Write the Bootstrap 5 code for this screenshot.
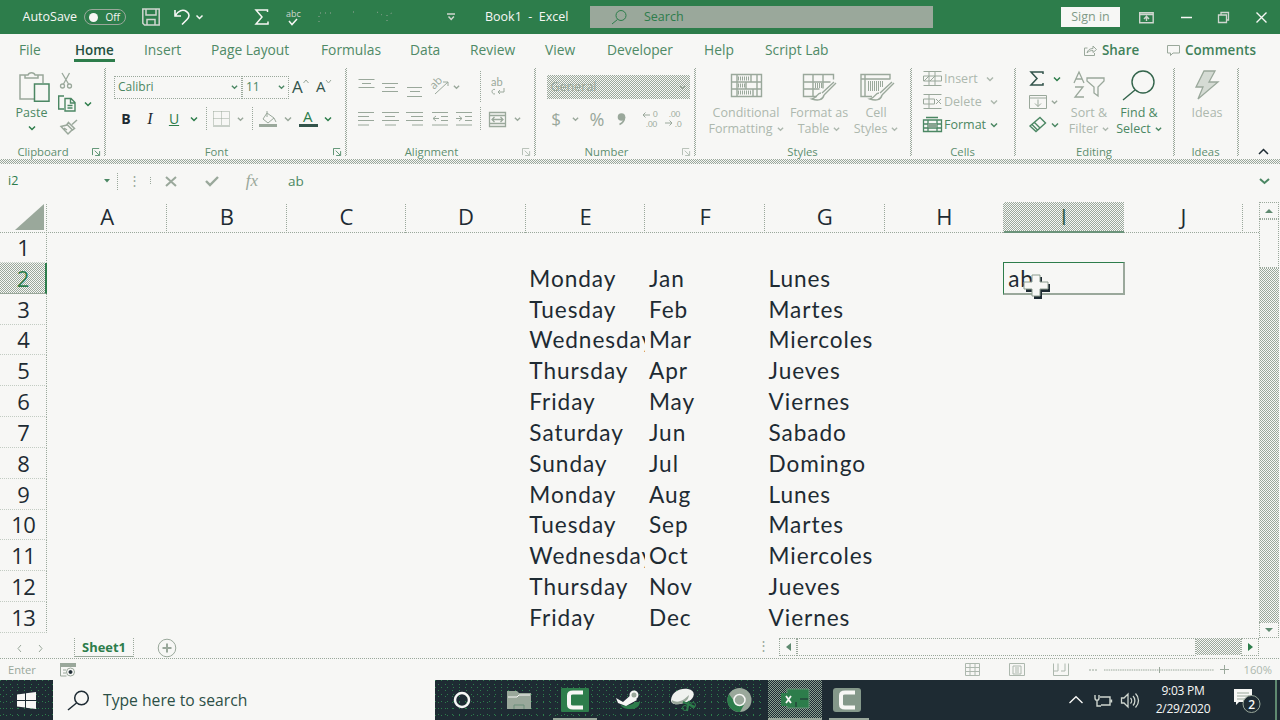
<!DOCTYPE html>
<html lang="en">
<head>
<meta charset="utf-8">
<title>Book1 - Excel</title>
<link rel="stylesheet" href="https://cdn.jsdelivr.net/npm/bootstrap@5.3.0/dist/css/bootstrap.min.css">
<style>
:root{--g:#2d7d4b;--w:#f7f7f5;--m:#9aa89b;--d:#1e2b33}
body{width:1280px;height:720px;overflow:hidden;background:var(--w);color:var(--g);font-family:"Open Sans","Noto Sans",sans-serif;font-size:12.5px;line-height:16px}
svg{display:block;flex:none;fill:none;stroke:currentColor;overflow:visible}
.tx{white-space:nowrap}
.mut{color:var(--m)}.drk{color:var(--d)}.mid{color:#4b8763}
.fade-t{color:#adb8ae}
.dither{background:repeating-conic-gradient(var(--m) 0 25%,var(--w) 0 50%) 0 0/2px 2px}
.dots-x{height:1px;background:repeating-linear-gradient(90deg,var(--m) 0 1px,transparent 1px 2px)}
.vdot{width:1px;background:repeating-linear-gradient(var(--m) 0 1px,transparent 1px 2px)}
/* title bar */
.titlebar{height:34px;background:var(--g);color:var(--w);display:grid;grid-template-columns:84px 58px 34px 75px 32px 32px 160px 115px 343px 128px 59px 34px 38px 37px 51px;align-items:center}
.toggle{width:42px;height:16px;border:1.5px solid var(--m);border-radius:9px;font-size:10px;line-height:12px;padding:0 5px 0 4px}
.knob{width:9px;height:9px;border-radius:50%;background:var(--w)}
.searchbox{height:22px;background:var(--m);color:var(--g)}
.signin{height:20px;background:var(--w);color:#7f9a87}
.autosave{padding-left:22.5px}
.booktitle{padding-left:10px}
/* tabs */
.tabs{height:32px;padding-left:19px;font-size:13.8px;color:#4f8a66;display:grid;grid-template-columns:56px 69px 67px 110px 89px 60px 75px 62px 97px 61px 319px 18px 65px 18px 80px;align-items:center}
.tabs .on{color:#24503f;font-weight:600;font-size:13.4px;position:relative}
.tabs .on::after{content:"";position:absolute;left:-1px;width:41px;height:3px;top:17px;background:var(--g)}
.tabs b{font-weight:600;color:#3f8159;font-size:13.4px}
.tabs b:last-child{letter-spacing:.1px}
/* ribbon */
.ribbon{height:93px}
.grp{height:93px;position:relative}
.grp::after{content:"";position:absolute;right:0;top:2px;width:2px;height:88px;background:repeating-conic-gradient(var(--m) 0 25%,var(--w) 0 50%) 0 0/2px 2px}
.cap{position:absolute;left:0;right:0;top:78px;text-align:center;font-size:11.3px;color:#5d8e6f}
.launch{position:absolute;right:5px;top:82px}
.g1{width:106px}.g2{width:241px}.g3{width:189px}.g4{width:160px}.g5{width:216px}.g6{width:104px}.g7{width:159px}.g8{width:64px}
.r2{display:grid;height:32px;align-items:center;justify-items:center}
.body2{padding-top:5px}
.fr1{grid-template-columns:128px 47px 22px 27px;padding-left:8px}
.fr2{grid-template-columns:24px 24px 24px 16px 8px 22px 17px 6px 25px 15px 26px 13px;padding-left:8px}
.al{grid-template-columns:24px 24px 25px 26px 22px 10px 24px 16px;padding-left:7px}
.nu{grid-template-columns:24px 14px 30px 18px 8px 24px 24px;padding-left:8px}
.combo{height:23px;border:1px dotted var(--m);padding:0 3px;font-size:12px;color:#4b8763}
.pastecol{width:63px;padding-top:5px}
.pastecol svg:first-child{margin-left:5px}
.clipcol{margin-left:-5px;padding-top:3px}
.clipcol .r3:not(:nth-child(2)){padding-left:2px}
.r3{height:23px}
.big{height:72px;padding-top:5px}
.big svg{margin-bottom:4px}
.sty{padding-top:8px}
.numbox{width:143px;height:24px}
.tiny{font:8px Lato,sans-serif}
.fbar{height:38px;padding-bottom:4px}
/* sheet */
.sheet{height:436px}
.hrow{display:grid;grid-template-columns:47.4px repeat(10,119.6px);height:30px;font-size:22px;line-height:29px;text-align:center;color:var(--d)}
.hrow>div{position:relative}
.hrow>div:not(.sel)::after{content:"";position:absolute;right:0;top:2px;bottom:0;width:1px;background:repeating-linear-gradient(var(--m) 0 1px,transparent 1px 2px)}
.hrow .sel{border-bottom:2px solid #6b937a;color:#346249}
.drow{display:grid;grid-template-columns:47.4px repeat(10,119.6px);height:30.83px;font-family:Lato,sans-serif;font-size:22.6px;line-height:30px;letter-spacing:.93px;color:var(--d);position:relative;top:-1px}
.drow .num{font-family:"Open Sans",sans-serif;font-size:22px;letter-spacing:-.6px;text-align:center;border-bottom:1px dotted #c3ccc3;border-right:1px dotted var(--m)}
.drow .num.sel{color:var(--g);border-right:2px solid var(--g);border-bottom:1px solid var(--m)}
.drow .cellx{padding-left:3.6px;overflow:hidden;white-space:nowrap;line-height:31px}
.drow .active{overflow:visible;position:relative;padding-left:4px}
.box{position:absolute;left:-1px;top:-1px;width:122px;height:33px;border:2px solid var(--m);border-top:1.5px solid var(--g);border-left:1.5px solid var(--g)}
.cursor{position:absolute;left:19px;top:10px}
.sbtn{border:1px dotted var(--m)}
.vsb{width:20px}
.tabsrow{height:20px}
.sheettab{width:60px;height:19px;line-height:18px;font-size:12.9px;border:1px dotted #9aa89b;border-top:0;border-bottom:1px solid #9aa89b}
.status{height:21px;font-size:11.2px}
.task{height:40px;background:var(--d);color:var(--w)}
.speck{background-color:var(--d);background-image:radial-gradient(circle at .5px .5px,#2d7d4b 0 .6px,transparent .65px),radial-gradient(circle at 3.5px 4.5px,#2d7d4b 0 .6px,transparent .65px);background-size:6px 7px,7px 6px}
.ti{height:40px;position:relative}
.run::after{content:"";position:absolute;left:4px;right:4px;bottom:0;height:2px;background:var(--m)}
.taskicons{display:grid;grid-template-columns:54px 60px 52px 54px 58px 52px 60px 48px;width:438px}
.taskicons .ti:nth-child(n+7){background-color:var(--d)}
.xl{width:54px;margin-left:3px;border-bottom:2px solid #9aa89b;background:repeating-conic-gradient(var(--d) 0 25%,#8a9f8f 0 50%) 0 0/2px 2px}
.find{width:382px;font-size:15.7px;color:#2c4f46;background:var(--w)}
.find svg{margin:0 14px 0 15px}
.clock{width:74px;font-size:12px;line-height:18px;letter-spacing:-.25px}
</style>
</head>
<body>
<svg width="0" height="0" class="position-absolute">
<symbol id="cv" viewBox="0 0 8 6"><path d="M1 1.5l3 3 3-3" fill="none" stroke="currentColor" stroke-width="1.5"/></symbol>
<symbol id="la" viewBox="0 0 10 9"><path d="M.5 8V.5H8M3 3l5 5M8.500 3.500v5h-5" fill="none" stroke="currentColor"/></symbol>
</svg>

<header class="titlebar">
<div class="tx autosave">AutoSave</div>
<div class="toggle d-flex align-items-center justify-content-between"><span class="knob"></span><span>Off</span></div>
<svg width="18" height="18" stroke-width="1.5" color="#cfd6cf"><path d="M.8 1h16.400v16H2.500L.8 15.300zM4 1v6h10V1M5 17v-5.500h8V17"/></svg>
<div class="d-flex align-items-center gap-1"><svg width="17" height="16" stroke-width="1.6" style="margin-left:-2px"><path d="M1 1v6h6M1.500 6.500C4 1.500 9 0 12.500 2.500s3 5.500.5 8L8 15.500"/></svg><svg width="9" height="6"><use href="#cv"/></svg></div>
<svg width="16" height="16" class="ms-1" stroke-width="1.5"><path d="M12.500 3V1H1l6 7-6 7h12v-2.500"/></svg>
<div><svg width="16" height="17" class="ms-1"><text x="-1" y="8" font-size="9" fill="#cfd6cf" stroke="none">abc</text><path d="M2 12l3 3.500L10 10" stroke-width="1.500"/></svg></div>
<div class="d-flex align-items-center mut"><svg width="132" height="16" stroke-dasharray="1 4"><path d="M4 13V4h12M38 3h5M62 3l5 3M72 12V6l5-2"/></svg><svg width="9" height="8" color="#cfd6cf"><path d="M0 1h8M1.500 3.500l2.700 3 2.700-3" stroke-width="1.5"/></svg></div>
<div class="tx booktitle">Book1 &nbsp;-&nbsp; Excel</div>
<div class="searchbox d-flex align-items-center"><svg width="16" height="15" class="ms-4" style="margin-right:14px"><circle cx="7" cy="5.500" r="5"/><path d="M3.500 9.500L-2 14"/></svg><span>Search</span></div>
<div></div>
<div class="signin d-flex align-items-center justify-content-center tx">Sign in</div>
<svg width="15" height="11" class="ms-auto" color="#cfd6cf"><path d="M.7.700h13.500v10H.7zM.7 2.500h13.500M7.500 9V4.500M5 7l2.500-2.700L10 7" stroke-width="1.4"/></svg>
<svg width="11" height="3" class="ms-auto"><path d="M0 1.500h11" stroke-width="1.5"/></svg>
<svg width="11" height="11" class="ms-auto" color="#cfd6cf"><path d="M.5 3h8v7.500h-8zM3 3V.5h7.500V8h-2" stroke-width="1.3"/></svg>
<svg width="11" height="11" class="ms-auto" style="margin-right:13px"><path d="M.5.500l10 10M10.500.500l-10 10" stroke-width="1.4"/></svg>
</header>

<nav class="tabs tx">
<span>File</span><span class="on">Home</span><span>Insert</span><span>Page Layout</span><span>Formulas</span><span>Data</span><span>Review</span><span>View</span><span>Developer</span><span>Help</span><span>Script Lab</span>
<svg width="13" height="11" class="mut"><path d="M3.500 3H.5v7.500h10V8M3 8c.5-3 3-4.500 6-4.500V1L12.500 4.500 9 7.500V5.500C6.500 5.500 5 6 3 8z"/></svg><b>Share</b>
<svg width="13" height="11" class="mut"><path d="M.5.500h12v7.500H6L3.500 10.500V8h-3z"/></svg><b>Comments</b>
</nav>

<section class="ribbon d-flex">
<div class="grp g1">
 <div class="d-flex">
  <div class="pastecol d-flex flex-column align-items-center">
   <svg width="31" height="31" class="mut" stroke-width="1.5"><path d="M16 28H1V4h6M18 4h6v8M6 7V4h3c1-3 6-3 7 0h3v3z"/><path d="M15.500 13H30v17.300H15.500z" color="#4b8763" stroke="#4b8763"/></svg>
   <span class="mid tx" style="margin-top:3px">Paste</span><svg width="8" height="6" class="mt-1"><use href="#cv"/></svg>
  </div>
  <div class="clipcol">
   <div class="r3 d-flex align-items-center"><svg width="12" height="16" class="mut" stroke-width="1.3"><path d="M2 0l6.500 11M9.500 0L3.500 11"/><circle cx="2.500" cy="13" r="2"/><circle cx="9.500" cy="13" r="2"/></svg></div>
   <div class="r3 d-flex align-items-center gap-2"><svg width="18" height="17" stroke-width="1.4" color="#4b8763"><path d="M6 14H.7V1H6M7 3.500h6l4 4v8.500H7zM12.500 4v4H17M9.500 10.500h5M9.500 13h5"/></svg><svg width="8" height="6"><use href="#cv"/></svg></div>
   <div class="r3 d-flex align-items-center"><svg width="18" height="16" class="mut" stroke-width="1.5"><path d="M17 1l-5 4.500M8.500 3.500l6 6-2 1.500-5.500-5.500zM7 6l-6 1.500L8 15l4-4M4 9l3 2"/></svg></div>
  </div>
 </div>
 <div class="cap pe-4" style="left:4px">Clipboard</div><svg class="launch mid" width="9" height="8"><use href="#la"/></svg>
</div>

<div class="grp g2 body2">
 <div class="r2 fr1"><div class="combo w-100 d-flex align-items-center justify-content-between">Calibri<svg width="7" height="6"><use href="#cv"/></svg></div><div class="combo w-100 d-flex align-items-center justify-content-between">11<svg width="7" height="6"><use href="#cv"/></svg></div>
 <svg width="19" height="16"><text x="1" y="14" font-size="17" fill="#33544b" stroke="none">A</text><path d="M12.500 4l2.500-3 2.500 3" stroke="#9aa89b"/></svg><svg width="17" height="16"><text x="0" y="13" font-size="15" fill="#33544b" stroke="none">A</text><path d="M10 1l2.500 3L15 1" stroke="#9aa89b"/></svg></div>
 <div class="r2 fr2"><b class="drk" style="font-size:14px">B</b><i class="drk" style="font-family:'Liberation Serif';font-size:16px">I</i><u style="font-size:14px">U</u><svg width="8" height="6"><use href="#cv"/></svg><span class="vdot h-75"></span>
 <svg width="17" height="16" class="mut"><path d="M.5.500h16v13M.5.500v13M8.500.500v13M.5 7.500h16" stroke-dasharray="1 1"/><path d="M0 15h17"/></svg><svg width="7" height="6" class="mut"><use href="#cv"/></svg><span class="vdot h-75"></span>
 <svg width="18" height="16" class="mut"><path d="M8 2l7 5-6 5-5-4zM8 6V0M15 7l2 4"/><path d="M0 14.500h18" stroke-width="3"/></svg><svg width="8" height="6" class="mut"><use href="#cv"/></svg>
 <svg width="19" height="17"><text x="4" y="11" font-size="15" fill="#2d7d4b" stroke="none">A</text><path d="M0 14.500h19" stroke="#33544b" stroke-width="3"/></svg><svg width="8" height="6"><use href="#cv"/></svg></div>
 <div class="cap" style="right:20px">Font</div><svg class="launch mid" width="9" height="8"><use href="#la"/></svg>
</div>

<div class="grp g3 body2 mut">
 <div class="r2 al"><svg width="17" height="17"><path d="M.5.500h16M4 4.500h9M.5 8.500h16"/></svg><svg width="17" height="9"><path d="M0 .5h16M3 4.500h10M0 8.500h16"/></svg><svg width="16" height="9" class="mt-2"><path d="M0 .5h15M3 4.500h10M0 9.500h15"/></svg>
 <svg width="18" height="16"><path d="M4 15L17 3M12 3h5v4"/><text transform="translate(3 11) rotate(-45)" font-size="11" fill="currentColor" stroke="none">ab</text></svg><svg width="7" height="6" class="me-auto"><use href="#cv"/></svg><span class="vdot h-100"></span><svg width="16" height="17"><g font-family="Lato" font-size="11" fill="currentColor" stroke="none"><text x="2" y="7">ab</text></g><path d="M6 10.500c-4-1-4 5 0 4.500M9 13h6V9M11 11l-2 2 2 2"/></svg></div>
 <div class="r2 al"><svg width="16" height="14"><path d="M0 .5h16M0 4.500h11M0 8.500h16M0 13h11"/></svg><svg width="17" height="14"><path d="M0 .5h17M3 4.500h10M0 8.500h17M3 13h11"/></svg><svg width="17" height="14"><path d="M0 .5h17M5 4.500h12M0 8.500h17M6 13h11"/></svg><svg width="16" height="14"><path d="M0 .5h16M9 4.500h7M9 8.500h7M0 13h16M7 6.500H1M4 4L1 6.500 4 9"/></svg><svg width="16" height="14"><path d="M0 .5h16M9 4.500h7M9 8.500h7M0 13h16M0 6.500h6M3 4l3 2.500L3 9"/></svg><span class="vdot h-75"></span><svg width="17" height="15" stroke-width="1.3"><path d="M.5.500h16v14H.5zM.5 3.500h16M.5 11.500h16M3 7.500h11M5.500 5L3 7.500 5.500 10M11.500 5L14 7.500 11.500 10"/></svg><svg width="7" height="6"><use href="#cv"/></svg></div>
 <div class="cap" style="right:20px">Alignment</div><svg class="launch fade-t" width="9" height="8"><use href="#la"/></svg>
</div>

<div class="grp g4 body2 mut">
 <div class="r2 justify-content-center"><div class="dither numbox d-flex align-items-center justify-content-between px-1 ms-1"><span>General</span><svg width="7" height="6"><use href="#cv"/></svg></div></div>
 <div class="r2 nu"><span style="font-size:17px">$</span><svg width="7" height="6"><use href="#cv"/></svg><span style="font-size:18px">%</span><svg width="9" height="13"><circle cx="4.500" cy="4" r="3.800" fill="currentColor" stroke="none"/><path d="M7.500 4c0 4-2 6-5 7.500" stroke-width="1.700"/></svg><span></span>
 <svg width="17" height="16"><path d="M8 4H1M3.500 1.500L1 4l2.500 2.500"/><g class="tiny" fill="currentColor" stroke="none"><text x="11" y="6">0</text><text x="4" y="16">.00</text></g></svg><svg width="18" height="16"><path d="M0 12h7M4.500 9.500L7 12l-2.500 2.500"/><g class="tiny" fill="currentColor" stroke="none"><text x="4" y="6">.00</text><text x="10" y="16">.0</text></g></svg></div>
 <div class="cap" style="right:19px">Number</div><svg class="launch fade-t" width="9" height="8"><use href="#la"/></svg>
</div>

<div class="grp g5 mut">
 <div class="d-flex ps-1 tx text-center">
 <div class="big sty d-flex flex-column align-items-center" style="width:92px"><svg width="31" height="23" stroke-width="1.4" class="mut"><path d="M.5.500h30v22H.5zM.5 8h30M.5 15h30M6 .5v22M20 .5v7M15 8v7M22 15v7M26 .5v22"/><path d="M7 4.500h12M7 11.500h7M7 18.500h14" stroke-width="4" stroke-dasharray="1 1"/></svg><span class="mt-1 fade-t">Conditional</span><span class="fade-t d-flex align-items-center gap-1">Formatting <svg width="7" height="6" class="mb-0"><use href="#cv"/></svg></span></div>
 <div class="big sty d-flex flex-column align-items-center" style="width:54px"><svg width="32" height="23" stroke-width="1.4"><path d="M14 22.500H.5V.5h30v5M.5 8h27M.5 15h16M10 .5v22M20 .5v14"/><path d="M31 8L19 19M33 9L21 21M18 19c-4 0-4 5-9 6 6 2 11 1 12-4"/><path d="M12 11.500h8" stroke-width="5" stroke-dasharray="1 1"/></svg><span class="mt-1 fade-t">Format as</span><span class="fade-t d-flex align-items-center gap-1">Table <svg width="7" height="6" class="mb-0"><use href="#cv"/></svg></span></div>
 <div class="big sty d-flex flex-column align-items-center" style="width:60px"><svg width="33" height="23" stroke-width="1.4"><path d="M12 22.500H1V.5h29v5M5 .5v22M1 5h29"/><path d="M8 10h16M8 14h12" stroke-width="6" stroke-dasharray="1 1"/><path d="M32 8L20 19M34 9L22 21M19 19c-4 0-4 5-9 6 6 2 11 1 12-4"/></svg><span class="mt-1 fade-t">Cell</span><span class="fade-t d-flex align-items-center gap-1">Styles <svg width="7" height="6" class="mb-0"><use href="#cv"/></svg></span></div>
 </div>
 <div class="cap" style="right:3px">Styles</div>
</div>

<div class="grp g6">
 <div class="tx" style="padding:1px 0 0 11px">
 <div class="r3 d-flex align-items-center fade-t"><svg width="19" height="15" class="mut" style="margin-right:2px"><path d="M.5.500h18M.5 14.500h18M.5 5h18v5H.5zM6 .5v14M12 .5v14M1 10l5-5M7 10l5-5"/></svg>Insert<svg width="8" height="6" class="ms-2"><use href="#cv"/></svg></div>
 <div class="r3 d-flex align-items-center fade-t"><svg width="19" height="15" class="mut" style="margin-right:2px"><path d="M.5.500h18M.5 14.500h18M.5 5h11v5H.5zM6 .5v14M13 5l5 5M18 5l-5 5"/></svg>Delete<svg width="8" height="6" class="ms-2"><use href="#cv"/></svg></div>
 <div class="r3 d-flex align-items-center mid"><svg width="19" height="15" style="margin-right:2px" stroke-width="1.3"><path d="M.5 3h18v11.500H.5zM.5 7h18M.5 11h18M5 3v11M14 3v11M3 .5h12"/><path d="M5 8.500h9" stroke-width="4" stroke="#8aa391"/></svg>Format<svg width="8" height="6" class="ms-1"><use href="#cv"/></svg></div>
 </div>
 <div class="cap" style="right:3px">Cells</div>
</div>

<div class="grp g7">
 <div class="d-flex tx ps-2">
 <div style="width:45px;padding:1px 0 0 5px">
 <div class="r3 d-flex align-items-center gap-2"><svg width="16" height="15" stroke-width="1.500" color="#33544b"><path d="M14 3V1H2l6 6.500-6 6.500h12v-2"/></svg><svg width="8" height="6"><use href="#cv"/></svg></div>
 <div class="r3 d-flex align-items-center gap-1 mut"><svg width="18" height="14"><path d="M.5.500h17v13H.5zM.5 3h17M9 4.500v7M6 8.500l3 3 3-3"/></svg><svg width="7" height="6"><use href="#cv"/></svg></div>
 <div class="r3 d-flex align-items-center gap-1 mid"><svg width="18" height="15" stroke-width="1.400"><path d="M11 .5l5.500 5.500L7 14.500 1 9zM5 5l6 6M3 7.500l5.500 5.500"/></svg><svg width="8" height="6"><use href="#cv"/></svg></div>
 </div>
 <div class="big d-flex flex-column align-items-center mut" style="width:40px"><svg width="33" height="28" stroke-width="1.300"><path d="M1 12L6 1l5 11M3 8h6M2 16h8L2 26h9M14 7h17v3l-6 6v9l-4-3v-6l-7-6z"/></svg><span class="fade-t" style="margin-top:2px">Sort &amp;</span><span class="fade-t d-flex align-items-center gap-1">Filter <svg width="7" height="6" class="mb-0"><use href="#cv"/></svg></span></div>
 <div class="big d-flex flex-column align-items-center mid" style="width:60px"><svg width="32" height="29" stroke-width="1.400" color="#33644b"><circle cx="20" cy="11" r="11"/><path d="M12 19L0 29"/></svg><span style="margin-top:1px">Find &amp;</span><span class="d-flex align-items-center gap-1">Select <svg width="7" height="6" class="mb-0"><use href="#cv"/></svg></span></div>
 </div>
 <div class="cap" style="right:3px">Editing</div>
</div>

<div class="grp g8">
 <div class="big d-flex flex-column align-items-center mut"><svg width="24" height="29" stroke-width="1.300"><path d="M9 0h11l-6 11h9L3 28l5-12H1z" fill="#d5dbd4"/></svg><span style="margin-top:1px" class="fade-t">Ideas</span></div>
 <div class="cap" style="right:3px">Ideas</div>
</div>
<div class="flex-grow-1 d-flex align-items-end justify-content-center"><svg width="11" height="7" class="drk mb-1 ms-2"><path d="M1 6l4.500-4.500L10 6" stroke-width="1.5"/></svg></div>
</section>

<div class="dither" style="height:5px"></div>

<div class="fbar d-flex align-items-center">
<span style="width:96px;padding-left:8px">i2</span>
<svg width="8" height="4" class="mid ms-2" style="margin-left:7px!important" viewBox="0 0 8 4"><path d="M1 0h6L4 3.500z" fill="currentColor" stroke="none"/></svg><span class="vdot h-50" style="margin-left:6px"></span>
<span class="mut text-center" style="width:32px">⋮</span><span class="vdot h-25"></span>
<svg width="12" height="11" class="mut" style="margin-left:14px" stroke-width="2"><path d="M1 1l10 9M11 1L1 10"/></svg>
<svg width="14" height="10" class="mut" style="margin-left:28px" stroke-width="2.4"><path d="M1 5l4 4 8-8"/></svg>
<i class="mut text-center" style="margin-left:23px;width:20px;font-family:'Liberation Serif';font-size:17px">fx</i>
<span class="mid" style="margin-left:26px;font-size:13.500px">ab</span>
<svg width="11" height="7" class="mid ms-auto" style="margin-right:10px" stroke-width="2"><path d="M1 1l4.500 4L10 1"/></svg>
</div>

<main class="sheet d-flex">
<div style="width:1259px" class="overflow-hidden" id="sheet">
 <div class="hrow" id="head"><div><svg width="30" height="26" class="ms-auto" style="margin-right:2px"><path d="M0 28L29 2v26z" fill="#9aa89b" stroke="none"/></svg></div></div>
 <div class="dots-x"></div>
</div>
<div class="vsb d-flex flex-column">
 <div class="sbtn d-flex align-items-center justify-content-center" style="height:17px"><svg width="8" height="4"><path d="M0 4h8L4 0z" fill="#5f8a70" stroke="none"/></svg></div>
 <div class="sbtn" style="height:49px"></div>
 <div class="dither flex-grow-1"></div>
 <div class="sbtn d-flex align-items-center justify-content-center" style="height:16px"><svg width="8" height="4"><path d="M0 0h8L4 4z" fill="#5f8a70" stroke="none"/></svg></div>
</div>
</main>

<div class="tabsrow d-flex">
 <div class="d-flex align-items-center justify-content-center gap-3 mut" style="width:74px;padding-right:14px"><svg width="5" height="7"><path d="M4 0L1 3.500 4 7"/></svg><svg width="5" height="7"><path d="M1 0l3 3.500L1 7"/></svg></div>
 <div class="tx text-center fw-bold sheettab">Sheet1</div>
 <svg width="20" height="20" class="mut ms-4"><circle cx="9" cy="10" r="8.800"/><path d="M4.500 10h9M9 5.500v9" stroke-width="2"/></svg>
 <span class="mut ms-auto" style="margin-right:9px">⋮</span>
 <div class="sbtn d-flex align-items-center justify-content-center" style="width:18px;height:18px"><svg width="5" height="8"><path d="M5 0v8L0 4z" fill="#5f8a70" stroke="none"/></svg></div>
 <div class="sbtn" style="width:399px;height:18px"></div><div class="dither" style="width:45px;height:17px"></div>
 <div class="sbtn d-flex align-items-center justify-content-center" style="width:18px;height:18px;margin-right:21px"><svg width="5" height="8"><path d="M0 0v8l5-4z" fill="#2d7d4b" stroke="none"/></svg></div>
</div>
<div class="dots-x"></div>
<div class="status d-flex align-items-center mut">
 <span style="width:60px;padding-left:8px">Enter</span>
 <svg width="16" height="14"><path d="M0 2h16" stroke-width="4"/><path d="M.5 4v9h6M3 7h3M3 10h3"/><circle cx="10.500" cy="9" r="4" fill="#f7f7f5"/><circle cx="10.500" cy="9" r="1.500" fill="#1e2b33" stroke="#1e2b33"/></svg>
 <svg width="15" height="13" class="ms-auto fade-t"><path d="M.5.500h14v12H.5zM.5 4.500h14M.5 8.500h14M5 .5v12M10 .5v12"/></svg>
 <svg width="16" height="13" class="fade-t" style="margin-left:29px"><path d="M.5.500h15v12H.5zM4 3h8v8H4zM6 5h4M6 7h4M6 9h4"/></svg>
 <svg width="16" height="13" class="fade-t" style="margin-left:28px"><path d="M.5 12.500V.5M5 .5V8H.5M8 8h4V.5M15.500.5v12H.5"/></svg>
 <svg width="8" height="2" style="margin-left:20px"><path d="M0 1h8" stroke-dasharray="2 1"/></svg>
 <svg width="110" height="8" style="margin-left:7px"><path d="M0 4h110" stroke-dasharray="1.500 .8"/><path d="M55.500 1v6"/></svg>
 <svg width="9" height="9" style="margin-left:6px"><path d="M0 4.500h9M4.500 0v9"/></svg>
 <span style="margin:0 8px 0 15px" class="fade-t">160%</span>
</div>

<footer class="task d-flex">
 <div class="speck d-flex align-items-center justify-content-center" style="width:53px"><svg width="19" height="17"><path d="M0 2.500L8 1.500V8H0zM9 1.300L19 0v8H9zM0 9h8v6.500L0 14.500zM9 9h10v8L9 15.700z" fill="#f7f7f5" stroke="none"/></svg></div>
 <div class="find d-flex align-items-center"><svg width="21" height="19" class="drk" stroke-width="1.500"><circle cx="13.500" cy="7" r="6.800"/><path d="M8.500 12L0 19"/></svg><span class="tx">Type here to search</span></div>
 <div class="taskicons speck">
  <div class="ti d-flex align-items-center justify-content-center"><svg width="18" height="18"><circle cx="9" cy="9" r="7" stroke-width="2.500"/></svg></div>
  <div class="ti d-flex align-items-center justify-content-center"><svg width="24" height="18"><path d="M0 0h10l2 2h12v16H0z" fill="#9aa89b" stroke="none"/><path d="M1 6h9l2-2h11" stroke="#f7f7f5"/><path d="M7 18v-4h10v4" stroke="#6b8f7a"/></svg></div>
  <div class="ti run d-flex align-items-center justify-content-center"><svg width="28" height="24"><rect width="28" height="24" rx="1" fill="#2d7d4b" stroke="none"/><path d="M22 4.500H12c-3 0-4 1-4 3v9c0 2 1 3 4 3h10" stroke-width="4"/></svg></div>
  <div class="ti d-flex align-items-center justify-content-center"><svg width="25" height="20"><path d="M4 14c3 3 13 1 15-2l5 0c-1 6-5 7-10 7s-8-1-10-5z" fill="#2d7d4b" stroke="none"/><path d="M0 8l7 4 9-8 5 6-11 6-8-3z" fill="#f7f7f5" stroke="none"/><circle cx="18" cy="5" r="3.500" stroke-width="2" fill="#9aa89b"/></svg></div>
  <div class="ti d-flex align-items-center justify-content-center"><svg width="26" height="22"><path d="M0 11C1 3 8-1 17 0c8 1 7 9 1 12S0 18 0 11z" fill="#f0f2ef" stroke="none"/><path d="M1 11c6 4 12 0 17-5-1 5-2 5-6 8-5 2-12 2-11-3z" fill="#9aa89b" stroke="none"/><path d="M12 13l12 5M18 12l-2 10" stroke="#2d7d4b" stroke-width="2"/><circle cx="14" cy="19" r="2.500" stroke="#2d7d4b"/><circle cx="22" cy="16" r="2.500" stroke="#2d7d4b"/></svg></div>
  <div class="ti d-flex align-items-center justify-content-center"><svg width="25" height="24"><circle cx="12.500" cy="12" r="12" fill="#9aa89b" stroke="none"/><path d="M2 6c-5 9 2 18 11 18l5-9-6 2-5-4z" fill="#2d7d4b" stroke="none"/><circle cx="12.500" cy="12" r="5.500" fill="#9aa89b" stroke="#f7f7f5" stroke-width="1.500"/></svg></div>
  <div class="ti d-flex align-items-center"><div class="xl h-100 d-flex align-items-center justify-content-center"><svg width="29" height="20"><path d="M6 0h22v19H6z" fill="#2d7d4b" stroke="#6b937a"/><path d="M0 4h14v13H0z" fill="#2d7d4b" stroke="none"/><path d="M5 7l5 7M10 7l-5 7" stroke-width="1.800"/><path d="M15 13v5M19 10h8" stroke="#1e2b33"/></svg></div></div>
  <div class="ti run d-flex align-items-center justify-content-center"><svg width="28" height="24" class="me-1"><rect width="28" height="24" rx="3" fill="#84988a" stroke="none"/><path d="M22 4.500H12c-3 0-4 1-4 3v9c0 2 1 3 4 3h10" stroke-width="4"/></svg></div>
 </div>
 <div class="ms-auto d-flex align-items-center">
  <svg width="14" height="8" stroke-width="1.400" style="margin-right:11px"><path d="M3.500 7L10 .8 16.500 7"/></svg>
  <svg width="19" height="13" style="margin-left:3px" color="#cfd6cf"><path d="M6 3h10v8H7M17.500 5.500v3M1 1v3c0 3 4 3 4 0V1M3 6v6h4" stroke-width="1.400"/></svg>
  <svg width="19" height="15" style="margin-left:8px;margin-right:6px" color="#cfd6cf"><path d="M.5 5H3l4-4v13l-4-4H.5zM9.500 5c1.500 1.500 1.500 4 0 5.500M12 3c2.500 2.500 2.500 7 0 9.500M14.500.500c4 4 4 10 0 14" stroke-width="1.300"/></svg>
  <div class="clock text-center tx">9:03 PM<br>2/29/2020</div>
  <svg width="27" height="25" style="margin-left:14px;margin-right:14px"><path d="M0 0h18v13H5l-3 3v-3H0z" fill="#f7f7f5" stroke="none" transform="translate(0 1)"/><path d="M3 5h12M3 8h12M3 11h8" stroke="#9aa89b"/><circle cx="17.500" cy="16" r="8.500" fill="#1e2b33" stroke="#9aa89b"/><text x="14.300" y="20.500" font-size="12" font-weight="600" fill="#f7f7f5" stroke="none">2</text></svg>
  <div style="width:5px;height:40px;border-left:2px solid #5f8a70"></div>
 </div>
</footer>

<script>
const days=['Monday','Tuesday','Wednesday','Thursday','Friday','Saturday','Sunday'];
const months=['Jan','Feb','Mar','Apr','May','Jun','Jul','Aug','Sep','Oct','Nov','Dec'];
const dias=['Lunes','Martes','Miercoles','Jueves','Viernes','Sabado','Domingo'];
const head=document.getElementById('head'),sheet=document.getElementById('sheet');
[...'ABCDEFGHIJ'].forEach(c=>{head.insertAdjacentHTML('beforeend',`<div class="${c==='I'?'sel dither':''}">${c}</div>`)});
for(let r=1;r<=13;r++){
  let h=`<div class="drow"><div class="num ${r===2?'sel dither':''}">${r}</div>`;
  for(let c=0;c<10;c++){
    let t='';
    if(r>1){const i=r-2; t=c===4?days[i%7]:c===5?months[i]:c===6?dias[i%7]:'';}
    if(r===2&&c===8) h+=`<div class="cellx active">ab<div class="box"></div><svg class="cursor" width="29" height="26"><path d="M11 4h8v7h8v8h-8v7h-8v-7H3v-8h8z" fill="#1e2b33" stroke="none"/><path d="M9 2h8v7h8v7h-8v7H9v-7H1V9h8z" fill="#f7f7f5" stroke="#8b9c8e"/></svg></div>`;
    else h+=`<div class="cellx">${t}</div>`;
  }
  sheet.insertAdjacentHTML('beforeend',h+'</div>');
}
</script>
<script src="https://cdn.jsdelivr.net/npm/bootstrap@5.3.0/dist/js/bootstrap.bundle.min.js"></script>
</body>
</html>
